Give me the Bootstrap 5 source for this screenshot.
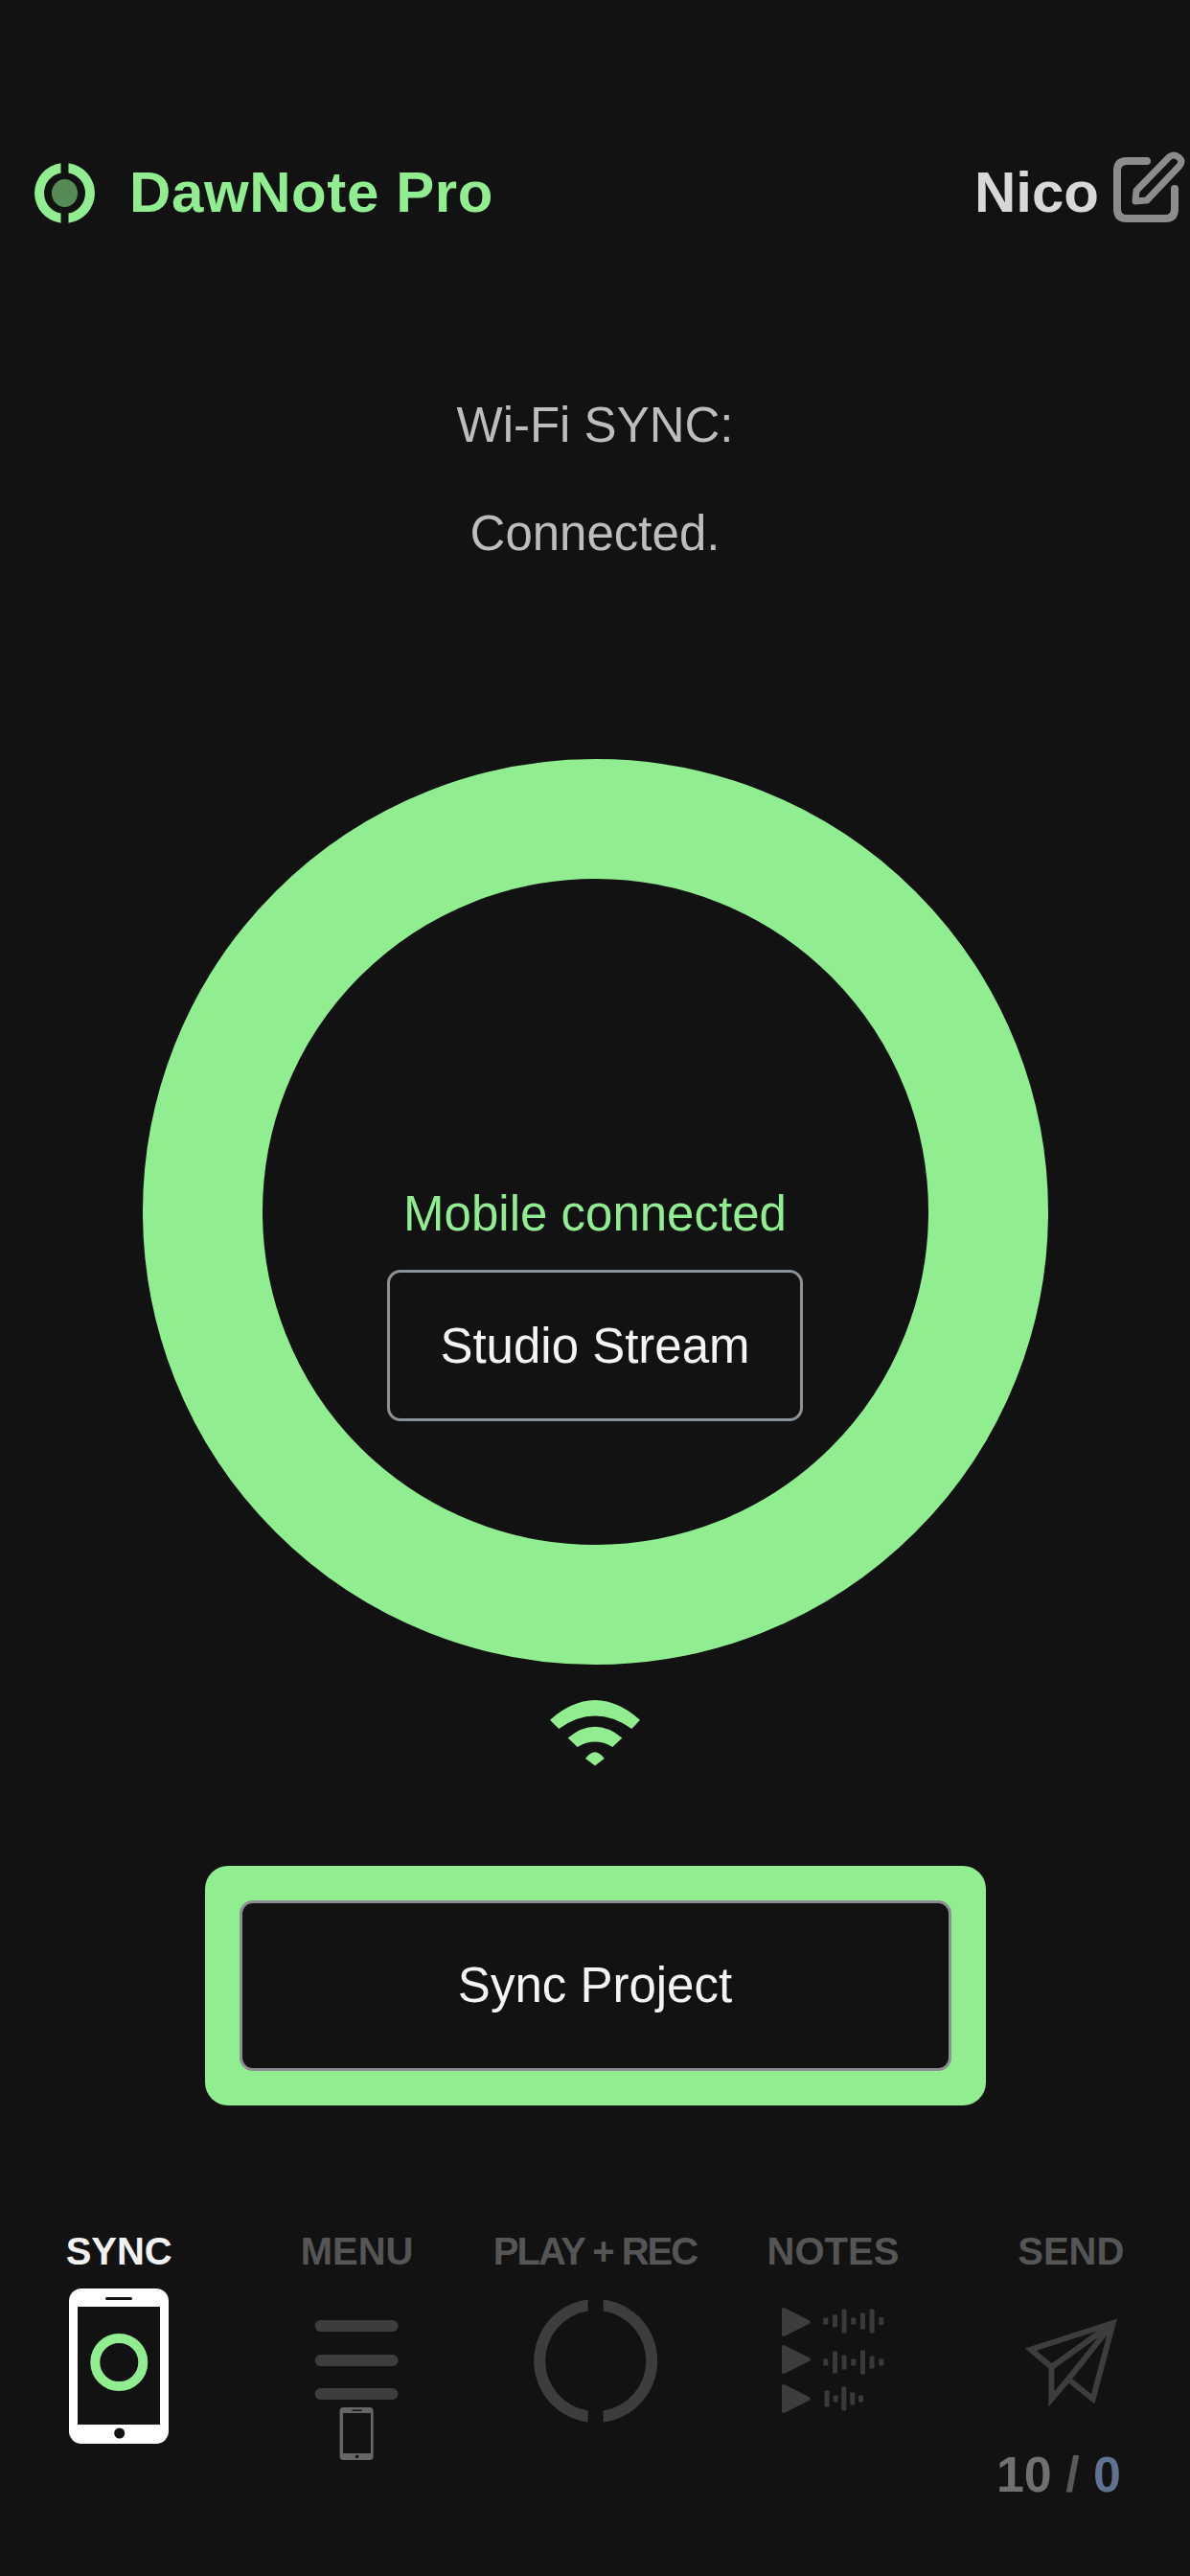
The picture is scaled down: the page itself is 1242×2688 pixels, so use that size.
<!DOCTYPE html>
<html lang="en">
<head>
<meta charset="utf-8">
<title>DawNote Pro</title>
<link rel="stylesheet" href="https://cdn.jsdelivr.net/npm/bootstrap@5.3.0/dist/css/bootstrap.min.css">
<style>
html,body{background:#121212}
body{font-family:"Liberation Sans",Arial,sans-serif;width:1242px;height:2688px;overflow:hidden;color:#fff}
.app-head{padding:157px 5px 0 36px;height:232px}
.app-logo{margin-top:13px}
.app-title{font-size:60px;font-weight:700;line-height:69px;color:#90ee90;margin:9px 0 0 36px;letter-spacing:.6px}
.app-user{font-size:60px;font-weight:700;line-height:69px;color:#d8d8d8;margin:9px 15px 0 0}
.status-line{font-size:51px;line-height:59px;color:#bdbdbd;margin:0}
.status-block{padding-top:182px;gap:54px}
.sync-ring{width:945px;height:945px;border:125px solid #90ee90;margin-top:206px;padding-top:320px}
.ring-label{font-size:51px;line-height:59px;color:#90ee90}
.stream-btn{width:434px;height:158px;margin-top:29px;font-size:51px;line-height:59px;color:#f4f4f4;background:#121212;border:3px solid #8a9297;border-radius:14px;padding:0}
.wifi-wrap{margin-top:37px;height:68px}
.sync-frame{width:815px;height:250px;margin-top:105px;padding:36px;background:#90ee90;border-radius:24px}
.sync-btn{width:100%;height:100%;font-size:51px;color:#f4f4f4;background:#121212;border:3px solid #8d8d96;border-radius:14px;padding:0}
.dock{margin-top:130px}
.dock-label{font-size:40px;font-weight:700;line-height:45px;color:#555;white-space:nowrap}
.dock-label-on{color:#f2f2f2}
.dock-label-tight{letter-spacing:-2px}
.dock-art{display:block;margin-top:13px}
.dock-count{font-size:52px;font-weight:700;line-height:59px;color:#707070;margin-top:3px;padding-right:72px;text-align:right;white-space:nowrap}
.dock-count-slash{color:#595959}
.dock-count-zero{color:#5f7391}
</style>
</head>
<body>
<header class="app-head d-flex justify-content-between align-items-start">
  <div class="d-flex align-items-start">
    <svg class="app-logo" width="63" height="63" viewBox="0 0 63 63" aria-hidden="true">
      <path fill="#90ee90" d="M27.5 .26A31.5 31.5 0 0 0 27.5 62.74V52.62A21.5 21.5 0 0 1 27.5 10.38Z"/>
      <path fill="#90ee90" d="M35.5 .26A31.5 31.5 0 0 1 35.5 62.74V52.62A21.5 21.5 0 0 0 35.5 10.38Z"/>
      <ellipse cx="31.5" cy="31.5" rx="13.5" ry="14.5" fill="#558b55"/>
    </svg>
    <span class="app-title">DawNote Pro</span>
  </div>
  <div class="d-flex align-items-start">
    <span class="app-user">Nico</span>
    <svg width="75" height="75" viewBox="242 27 75 75" aria-hidden="true" fill="none" stroke="#8c8c8c" stroke-width="8" stroke-linecap="round" stroke-linejoin="round">
      <path d="M277 38H256Q246 38 246 48V88Q246 98 256 98H296Q306 98 306 88V67"/>
      <path stroke-width="7" d="M266 69L300 34Q305 30 310 34Q315 38 311 43L277 79L265 80Z"/>
    </svg>
  </div>
</header>

<main class="d-flex flex-column align-items-center">
  <div class="status-block d-flex flex-column align-items-center">
    <p class="status-line">Wi-Fi SYNC:</p>
    <p class="status-line">Connected.</p>
  </div>

  <div class="sync-ring rounded-circle d-flex flex-column align-items-center">
    <div class="ring-label">Mobile connected</div>
    <button type="button" class="btn stream-btn">Studio Stream</button>
  </div>

  <div class="wifi-wrap">
    <svg width="94" height="68.5" viewBox="0 0 94 68.5" aria-hidden="true" fill="#90ee90" class="d-block">
      <path d="M0 20.7Q47 -20.7 94 20.7L85.3 29.9Q47 3.3 9.3 29.9Z"/>
      <path d="M18.7 39.4Q47 16.2 75.3 39.4L65.3 48.9Q47 38.3 28.7 48.9Z"/>
      <path d="M37 61Q47 47.6 56.7 61L47 68.5Z"/>
    </svg>
  </div>

  <div class="sync-frame">
    <button type="button" class="btn sync-btn">Sync Project</button>
  </div>
</main>

<nav class="dock row g-0 text-center">
  <div class="col">
    <div class="dock-label dock-label-on">SYNC</div>
    <svg class="dock-art" width="248.4" height="190" viewBox="0 0 248.4 190" aria-hidden="true">
      <rect x="72" y="3" width="104" height="162" rx="13" fill="#fff"/>
      <rect x="81" y="22" width="86" height="123" fill="#121212"/>
      <rect x="110" y="12" width="28" height="3" rx="1.5" fill="#121212"/>
      <circle cx="124.7" cy="154" r="5.5" fill="#121212"/>
      <circle cx="124.3" cy="80" r="25" fill="none" stroke="#90ee90" stroke-width="10"/>
    </svg>
  </div>
  <div class="col">
    <div class="dock-label">MENU</div>
    <svg class="dock-art" width="248.4" height="190" viewBox="0 0 248.4 190" aria-hidden="true">
      <rect x="80.6" y="36" width="87" height="12" rx="6" fill="#3d3d3d"/>
      <rect x="80.6" y="72" width="87" height="12" rx="6" fill="#3d3d3d"/>
      <rect x="80.6" y="107" width="87" height="12" rx="6" fill="#3d3d3d"/>
      <rect x="106.6" y="127" width="35" height="55" rx="4" fill="#666"/>
      <rect x="110" y="133" width="29" height="42" fill="#121212"/>
      <rect x="119.5" y="129.5" width="10" height="1.5" fill="#121212"/>
      <circle cx="124.6" cy="178.4" r="1.8" fill="#121212"/>
    </svg>
  </div>
  <div class="col">
    <div class="dock-label dock-label-tight">PLAY + REC</div>
    <svg class="dock-art" width="248.4" height="190" viewBox="0 0 248.4 190" aria-hidden="true" fill="#3d3d3d">
      <path d="M116.7 14.5A64.5 64.5 0 0 0 116.7 142.5V130.4A52.5 52.5 0 0 1 116.7 26.6Z"/>
      <path d="M132.7 14.5A64.5 64.5 0 0 1 132.7 142.5V130.4A52.5 52.5 0 0 0 132.7 26.6Z"/>
    </svg>
  </div>
  <div class="col">
    <div class="dock-label">NOTES</div>
    <svg class="dock-art" width="248.4" height="190" viewBox="0 0 248.4 190" aria-hidden="true" fill="#3d3d3d">
      <g stroke="#3d3d3d" stroke-width="4" stroke-linejoin="round">
        <path d="M73 25V51L98.8 38Z"/>
        <path d="M73 64V90L98.8 77Z"/>
        <path d="M73 105V131L98.8 118Z"/>
      </g>
      <g fill="#3a3a3a">
        <rect x="114.3" y="33.5" width="5" height="7" rx="1"/><rect x="124" y="30.5" width="5" height="13" rx="1"/><rect x="133.6" y="24.5" width="5" height="25" rx="1"/><rect x="143.3" y="33.5" width="5" height="7" rx="1"/><rect x="153" y="28.5" width="5" height="17" rx="1"/><rect x="162.6" y="24.5" width="5" height="25" rx="1"/><rect x="172.3" y="33" width="5" height="8" rx="1"/>
        <rect x="114.3" y="76.5" width="5" height="7" rx="1"/><rect x="124" y="68.5" width="5" height="23" rx="1"/><rect x="133.6" y="72.5" width="5" height="15" rx="1"/><rect x="143.3" y="76.5" width="5" height="7" rx="1"/><rect x="153" y="67.5" width="5" height="25" rx="1"/><rect x="162.6" y="73.5" width="5" height="13" rx="1"/><rect x="172.3" y="76.5" width="5" height="7" rx="1"/>
        <rect x="115.6" y="109.5" width="5" height="17" rx="1"/><rect x="124.6" y="114.5" width="5" height="7" rx="1"/><rect x="133.3" y="105.5" width="5" height="25" rx="1"/><rect x="142.3" y="111.5" width="5" height="13" rx="1"/><rect x="151" y="114.5" width="5" height="7" rx="1"/>
      </g>
    </svg>
  </div>
  <div class="col">
    <div class="dock-label">SEND</div>
    <svg class="dock-art" width="248.4" height="165" viewBox="0 0 248.4 165" aria-hidden="true" fill="none" stroke="#3d3d3d" stroke-width="6" stroke-miterlimit="10">
      <path d="M167.7 39L81.7 66.7L103.4 85V118.3L121 97.7L146.7 118.3Z"/>
      <path d="M103.4 85L167.7 39M121 97.7L167.7 39"/>
    </svg>
    <div class="dock-count">10 <span class="dock-count-slash">/</span> <span class="dock-count-zero">0</span></div>
  </div>
</nav>
<script src="https://cdn.jsdelivr.net/npm/bootstrap@5.3.0/dist/js/bootstrap.bundle.min.js"></script>
</body>
</html>
